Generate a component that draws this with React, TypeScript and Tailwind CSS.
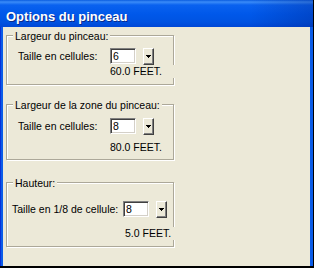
import React from "react";

function Arrow() {
  return (
    <svg width="5" height="3" viewBox="0 0 5 3" shapeRendering="crispEdges">
      <rect x="0" y="0" width="5" height="1" fill="#000" />
      <rect x="1" y="1" width="3" height="1" fill="#000" />
      <rect x="2" y="2" width="1" height="1" fill="#000" />
    </svg>
  );
}

function Field({ value }: { value: string }) {
  return (
    <div className="w-[26px] h-[16px] bg-white border border-t-[#808080] border-l-[#808080] border-b-white border-r-white shadow-[inset_1px_1px_0_#404040,inset_-1px_-1px_0_#d4d0c8] pl-[2px] leading-[14px]">
      {value}
    </div>
  );
}

function Btn() {
  return (
    <div className="ml-[7px] w-[11px] h-[17px] bg-[#ece9d8] border border-t-white border-l-white border-b-[#404040] border-r-[#404040] shadow-[inset_-1px_-1px_0_#808080] flex items-center justify-center">
      <Arrow />
    </div>
  );
}

export default function App() {
  return (
    <div className="w-[314px] h-[268px] bg-black font-['Liberation_Sans',Arial,sans-serif] text-[10.5px] text-black">
      <div className="w-[313px] h-[266px] flex flex-col">
        <div className="h-[27px] shrink-0 bg-[linear-gradient(to_right,rgba(0,0,0,0)_80%,rgba(0,20,110,0.25)),linear-gradient(to_bottom,#0a5ddf_0px,#3b8cf8_2px,#0a62ef_5px,#0058ea_14px,#0053e1_22px,#0047d6_27px)] pl-[6px] pt-[9px]">
          <div className="text-[13px] leading-[15px] font-bold text-white [text-shadow:1px_1px_0_#0a2a8a]">
            Options du pinceau
          </div>
        </div>
        <div className="flex-1 flex">
          <div className="w-[1px] bg-[#0831d9]" />
          <div className="w-[2px] bg-[#0b5ce8]" />
          <div className="flex-1 bg-[#ece9d8] pl-[3px] pt-[8px]">
            {/* Group 1 */}
            <div className="relative w-[168px] h-[50px] border border-[#aca899] shadow-[inset_1px_1px_0_#fff,1px_1px_0_#fff] pt-[12px]">
              <span className="absolute left-[6px] top-[-6px] px-[2px] bg-[#ece9d8] leading-[13px]">
                Largeur du pinceau:
              </span>
              <div className="flex items-start h-[17px]">
                <span className="pl-[11px] w-[103px] leading-[16px]">Taille en cellules:</span>
                <Field value="6" />
                <Btn />
              </div>
              <div className="ml-[103px] w-[68px] h-[13px] leading-[13px] bg-[#ece9d8]">60.0 FEET.</div>
            </div>
            {/* Group 2 */}
            <div className="relative mt-[19px] w-[168px] h-[56px] border border-[#aca899] shadow-[inset_1px_1px_0_#fff,1px_1px_0_#fff] pt-[13px]">
              <span className="absolute left-[6px] top-[-6px] px-[2px] bg-[#ece9d8] leading-[13px]">
                Largeur de la zone du pinceau:
              </span>
              <div className="flex items-start h-[17px]">
                <span className="pl-[11px] w-[103px] leading-[16px]">Taille en cellules:</span>
                <Field value="8" />
                <Btn />
              </div>
              <div className="mt-[6px] ml-[103px] h-[13px] leading-[13px]">80.0 FEET.</div>
            </div>
            {/* Group 3 */}
            <div className="relative mt-[22px] w-[168px] h-[65px] border border-[#aca899] shadow-[inset_1px_1px_0_#fff,1px_1px_0_#fff] pt-[18px]">
              <span className="absolute left-[6px] top-[-6px] px-[2px] bg-[#ece9d8] leading-[13px]">
                Hauteur:
              </span>
              <div className="flex items-start h-[17px]">
                <span className="pl-[5px] w-[116px] leading-[16px] whitespace-nowrap">Taille en 1/8 de cellule:</span>
                <Field value="8" />
                <Btn />
              </div>
              <div className="mt-[9px] ml-[118px] w-[53px] h-[13px] leading-[13px] bg-[#ece9d8]">5.0 FEET.</div>
            </div>
          </div>
          <div className="w-[3px] bg-[#0b5ce8]" />
        </div>
      </div>
    </div>
  );
}
